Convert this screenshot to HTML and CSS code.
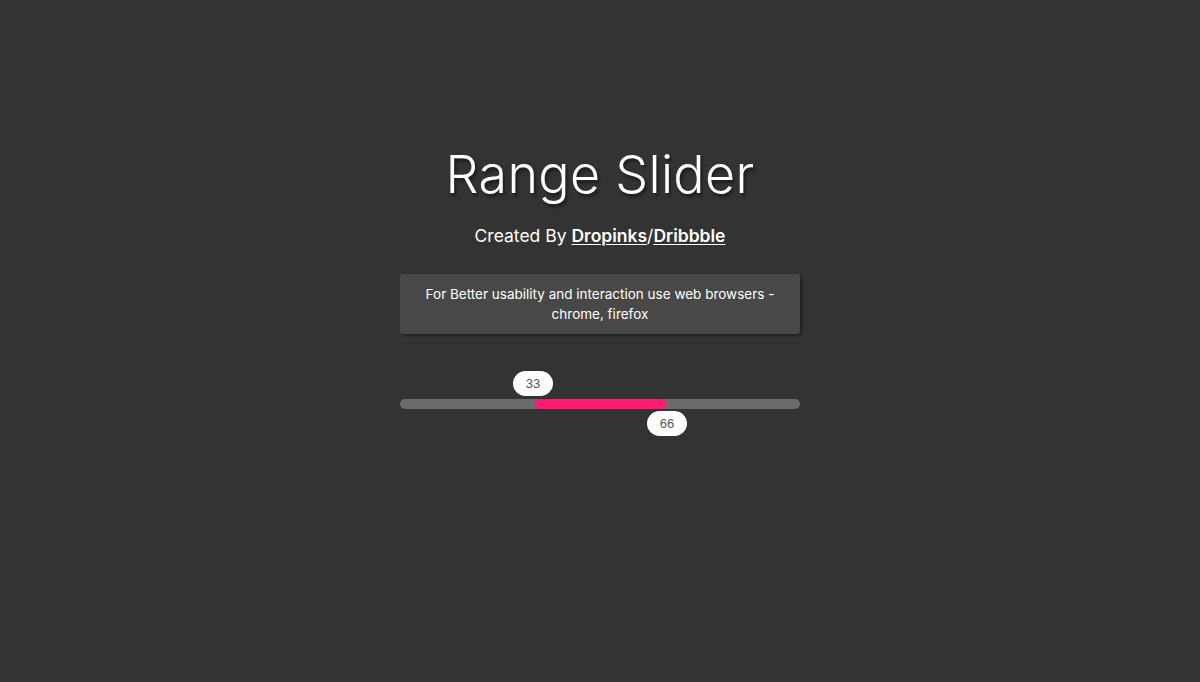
FILE: index.html
```html
<!DOCTYPE html>
<html>
<head>
<meta charset="utf-8">
<link rel="stylesheet" href="styles.css">
</head>
<body>
<div class="page">
  <h1 class="title">Range Slider</h1>
  <p class="credit">Created By <a href="#">Dropinks</a>/<a href="#">Dribbble</a></p>
  <div class="note">For Better usability and interaction use web browsers - chrome, firefox</div>
  <div class="slider">
    <div class="labels labels-top">
      <span class="tip" style="margin-left:113px">33</span>
    </div>
    <div class="track">
      <div class="range" style="left:33.5%;width:33%"></div>
    </div>
    <div class="labels labels-bottom">
      <span class="tip" style="margin-left:247px">66</span>
    </div>
  </div>
</div>
</body>
</html>
```
FILE: styles.css
```css
html, body {
  margin: 0;
  padding: 0;
  background: #333333;
  font-family: "Inter", "Open Sans", sans-serif;
  color: #fff;
}
.page {
  display: flex;
  flex-direction: column;
  align-items: center;
  padding-top: 142px;
}
.title {
  margin: 0;
  font-size: 52px;
  font-weight: 300;
  line-height: 66px;
  letter-spacing: 0.3px;
  text-shadow: 2px 3px 3px rgba(0,0,0,0.45);
}
.credit {
  margin: 15px 0 0;
  font-size: 17.5px;
  line-height: 26px;
  font-weight: 400;
}
.credit a {
  color: #fff;
  font-weight: 600;
  text-decoration: underline;
  text-underline-offset: 2px;
}
.note {
  margin-top: 25px;
  width: 400px;
  box-sizing: border-box;
  padding: 10px 14px;
  background: #484848;
  border-radius: 3px;
  box-shadow: 2px 2px 2px rgba(0,0,0,0.35);
  font-size: 13.5px;
  line-height: 20px;
  text-align: center;
}
.slider {
  margin-top: 37px;
  width: 400px;
  display: flex;
  flex-direction: column;
}
.labels {
  display: flex;
  height: 25px;
}
.labels-top { margin-bottom: 3px; }
.labels-bottom { margin-top: 2px; }
.track {
  position: relative;
  height: 10px;
  border-radius: 5px;
  background: #6b6b6b;
}
.range {
  position: absolute;
  top: 0;
  bottom: 0;
  background: #ff1a72;
  border-radius: 5px;
}
.tip {
  display: block;
  width: 40px;
  height: 25px;
  line-height: 25px;
  border-radius: 13px;
  background: #fff;
  color: #555;
  font-family: "Liberation Sans", Arial, sans-serif;
  font-size: 13px;
  text-align: center;
}
```
